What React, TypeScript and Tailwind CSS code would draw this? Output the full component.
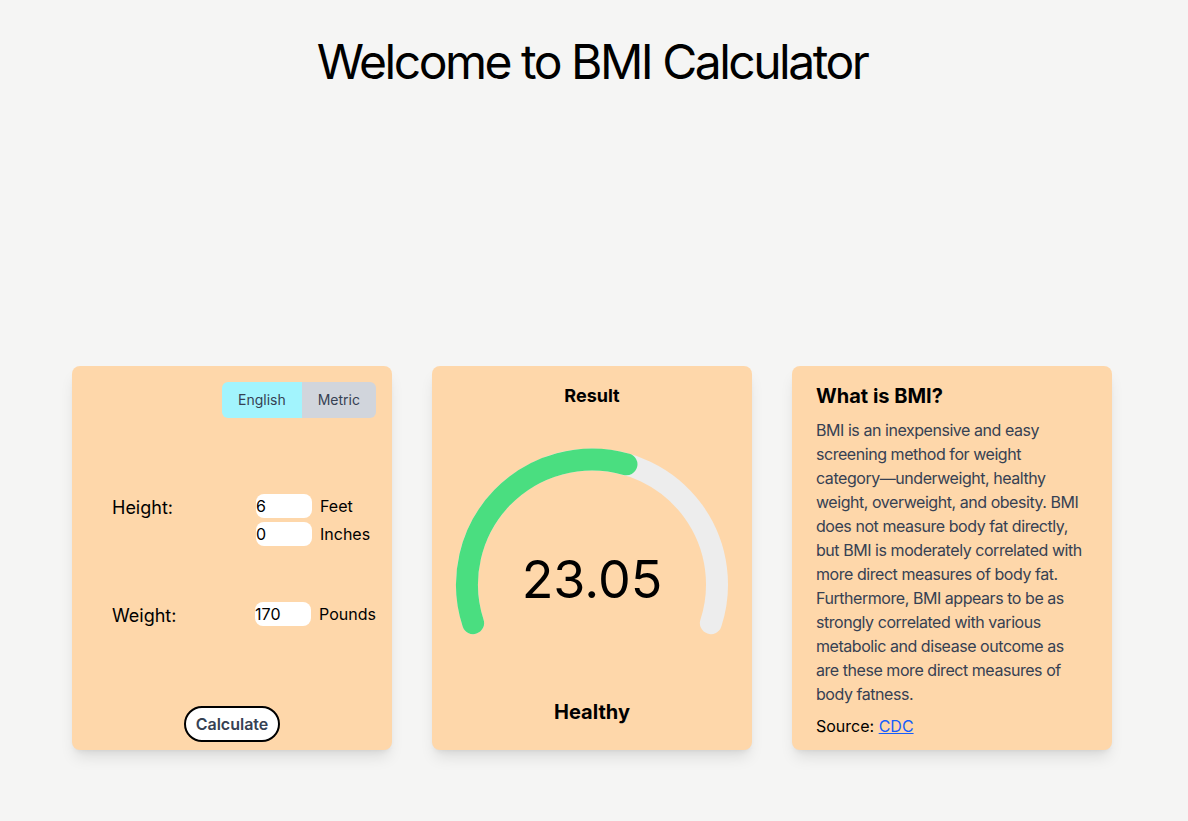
import React from "react";

const GAUGE = {
  cx: 160,
  cy: 174.5,
  r: 125,
};

const ABOUT_LINES = [
  "BMI is an inexpensive and easy",
  "screening method for weight",
  "category—underweight, healthy",
  "weight, overweight, and obesity. BMI",
  "does not measure body fat directly,",
  "but BMI is moderately correlated with",
  "more direct measures of body fat.",
  "Furthermore, BMI appears to be as",
  "strongly correlated with various",
  "metabolic and disease outcome as",
  "are these more direct measures of",
  "body fatness.",
];

function point(deg: number) {
  const rad = (deg * Math.PI) / 180;
  return {
    x: GAUGE.cx + GAUGE.r * Math.sin(rad),
    y: GAUGE.cy - GAUGE.r * Math.cos(rad),
  };
}

function arc(from: number, to: number) {
  const a = point(from);
  const b = point(to);
  const large = to - from > 180 ? 1 : 0;
  return `M ${a.x} ${a.y} A ${GAUGE.r} ${GAUGE.r} 0 ${large} 1 ${b.x} ${b.y}`;
}

function Gauge() {
  return (
    <svg width="320" height="288" viewBox="0 0 320 288" className="block">
      <path d={arc(-108, 108)} fill="none" stroke="#ededed" strokeWidth="22" strokeLinecap="round" />
      <path d={arc(-108, 16)} fill="none" stroke="#4ade80" strokeWidth="22" strokeLinecap="round" />
    </svg>
  );
}

function InputRow({ value, unit }: { value: string; unit: string }) {
  return (
    <div className="flex items-center gap-2">
      <input
        defaultValue={value}
        className="h-6 w-14 rounded-lg bg-white text-base text-black outline-none"
      />
      <span className="text-base text-black">{unit}</span>
    </div>
  );
}

export default function App() {
  return (
    <div className="min-h-screen bg-[#f5f5f4] pr-1 font-['Inter',sans-serif] text-black">
      <h1 className="pt-[38px] text-center text-5xl leading-none tracking-[-2.5px]">Welcome to BMI Calculator</h1>

      <div className="mt-[280px] flex justify-center gap-10">
        {/* input card */}
        <div className="flex h-96 w-80 flex-col rounded-lg bg-[#fed7aa] px-4 pt-4 pb-2 shadow-lg">
          <div className="flex justify-end">
            <div className="flex overflow-hidden rounded-md text-sm text-gray-700">
              <button className="bg-cyan-200 px-4 py-2">English</button>
              <button className="bg-gray-300 px-4 py-2">Metric</button>
            </div>
          </div>

          <div className="mt-[76px] ml-6 flex items-start">
            <div className="w-36 text-lg leading-7">Height:</div>
            <div className="flex flex-col gap-1">
              <InputRow value="6" unit="Feet" />
              <InputRow value="0" unit="Inches" />
            </div>
          </div>

          <div className="mt-14 ml-6 flex items-start">
            <div className="w-36 text-lg leading-7">Weight:</div>
            <InputRow value="170" unit="Pounds" />
          </div>

          <div className="mt-auto flex justify-center">
            <button className="h-9 rounded-full border-2 border-black bg-white px-[10px] text-base font-semibold text-gray-700">
              Calculate
            </button>
          </div>
        </div>

        {/* result card */}
        <div className="flex h-96 w-80 flex-col rounded-lg bg-[#fed7aa] pt-4 pb-6 shadow-lg">
          <div className="text-center text-lg font-bold leading-7">Result</div>
          <div className="relative">
            <Gauge />
            <div className="absolute inset-x-0 top-[140px] text-center text-[52px] leading-[60px]">23.05</div>
          </div>
          <div className="text-center text-xl font-bold leading-7">Healthy</div>
        </div>

        {/* info card */}
        <div className="flex h-96 w-80 flex-col rounded-lg bg-[#fed7aa] px-6 pt-4 shadow-lg">
          <h2 className="text-xl font-bold leading-7">What is BMI?</h2>
          <p className="mt-2 text-base leading-6 tracking-[-0.45px] whitespace-nowrap text-gray-700">
            {ABOUT_LINES.map((line, i) => (
              <React.Fragment key={i}>
                {line}
                {i < ABOUT_LINES.length - 1 && <br />}
              </React.Fragment>
            ))}
          </p>
          <div className="mt-2 text-base leading-6">
            Source:{" "}
            <a href="#" className="text-blue-600 underline">
              CDC
            </a>
          </div>
        </div>
      </div>
    </div>
  );
}
